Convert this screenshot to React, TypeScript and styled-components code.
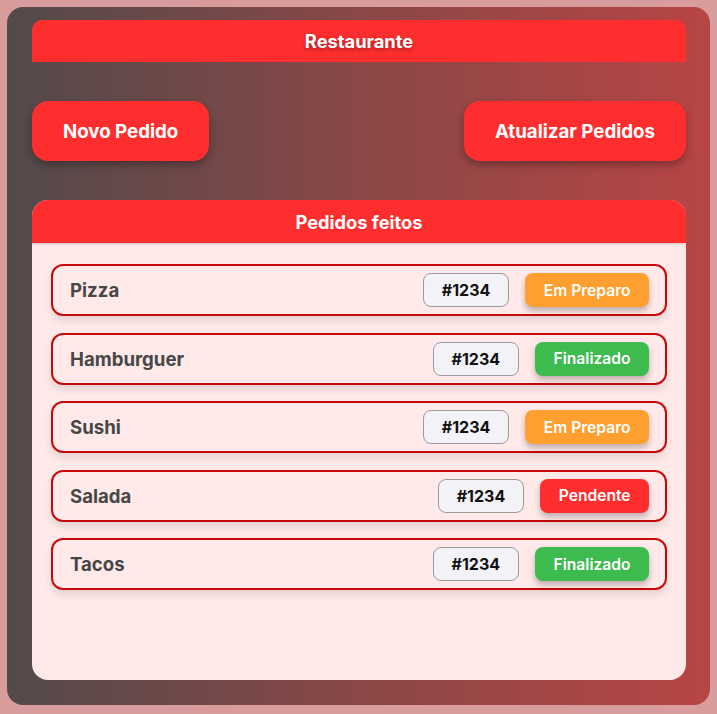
import React from "react";
import styled, { createGlobalStyle } from "styled-components";

const Global = createGlobalStyle`
  html, body { margin: 0; padding: 0; }
  body {
    background: #d99c9c;
    font-family: Inter, "Noto Sans", sans-serif;
  }
`;

const Page = styled.div`
  padding: 7px;
  width: 717px;
  height: 714px;
  box-sizing: border-box;
`;

const Panel = styled.div`
  height: 698px;
  box-sizing: border-box;
  border-radius: 16px;
  background: linear-gradient(to right, #534a4a 0%, #8a4747 50%, #b84545 100%);
  padding: 13px 24px 25px 25px;
  display: flex;
  flex-direction: column;
`;

const TopBar = styled.header`
  height: 42px;
  background: #ff2e2e;
  border-radius: 10px 10px 0 0;
  display: flex;
  align-items: center;
  justify-content: center;
  color: #fff;
  font-weight: 700;
  font-size: 18.3px;
  text-shadow: 0 2px 4px rgba(0, 0, 0, 0.35);
`;

const Actions = styled.div`
  display: flex;
  justify-content: space-between;
  margin-top: 39px;
`;

const ActionButton = styled.button`
  height: 60px;
  padding: 0 31px;
  border: none;
  border-radius: 16px;
  background: #ff2e2e;
  color: #fff;
  font-family: Inter, "Noto Sans", sans-serif;
  font-size: 18.7px;
  font-weight: 700;
  box-shadow: 0 4px 8px rgba(0, 0, 0, 0.3);
  cursor: pointer;
`;

const Card = styled.section`
  margin-top: 39px;
  flex: 1;
  background: #ffe9e9;
  border-radius: 16px;
  overflow: hidden;
  display: flex;
  flex-direction: column;
`;

const CardHeader = styled.div`
  height: 43px;
  background: #ff2e2e;
  color: #fff;
  font-size: 18.3px;
  font-weight: 700;
  display: flex;
  align-items: center;
  justify-content: center;
  box-shadow: 0 1px 2px rgba(0, 0, 0, 0.2);
`;

const List = styled.div`
  display: flex;
  flex-direction: column;
  gap: 16.5px;
  padding: 21px 19px;
`;

const Row = styled.div`
  height: 52px;
  box-sizing: border-box;
  border: 2px solid #c40a0a;
  border-radius: 12px;
  display: flex;
  align-items: center;
  padding: 0 16px 0 17px;
  gap: 16px;
  box-shadow: 0 5px 8px rgba(0, 0, 0, 0.1);
`;

const Name = styled.span`
  flex: 1;
  font-size: 18.6px;
  font-weight: 700;
  color: #474747;
`;

const OrderId = styled.span`
  height: 34px;
  box-sizing: border-box;
  padding: 0 18px;
  border: 1.5px solid #9a9a9f;
  border-radius: 8px;
  background: #f2f2f7;
  display: flex;
  align-items: center;
  font-size: 16px;
  font-weight: 700;
  color: #111;
`;

const statusColors: Record<string, string> = {
  "Em Preparo": "#ff9f30",
  Finalizado: "#3dbb4f",
  Pendente: "#ff2e2e",
};

const Status = styled.span<{ $color: string }>`
  height: 34px;
  box-sizing: border-box;
  padding: 0 18.5px;
  border-radius: 8px;
  background: ${(p) => p.$color};
  display: flex;
  align-items: center;
  font-size: 15.6px;
  font-weight: 600;
  color: #fff;
  box-shadow: 0 4px 6px rgba(0, 0, 0, 0.25);
`;

const orders = [
  { name: "Pizza", id: "#1234", status: "Em Preparo" },
  { name: "Hamburguer", id: "#1234", status: "Finalizado" },
  { name: "Sushi", id: "#1234", status: "Em Preparo" },
  { name: "Salada", id: "#1234", status: "Pendente" },
  { name: "Tacos", id: "#1234", status: "Finalizado" },
];

export default function App() {
  return (
    <>
      <Global />
      <Page>
        <Panel>
          <TopBar>Restaurante</TopBar>
          <Actions>
            <ActionButton>Novo Pedido</ActionButton>
            <ActionButton>Atualizar Pedidos</ActionButton>
          </Actions>
          <Card>
            <CardHeader>Pedidos feitos</CardHeader>
            <List>
              {orders.map((o) => (
                <Row key={o.name}>
                  <Name>{o.name}</Name>
                  <OrderId>{o.id}</OrderId>
                  <Status $color={statusColors[o.status]}>{o.status}</Status>
                </Row>
              ))}
            </List>
          </Card>
        </Panel>
      </Page>
    </>
  );
}
